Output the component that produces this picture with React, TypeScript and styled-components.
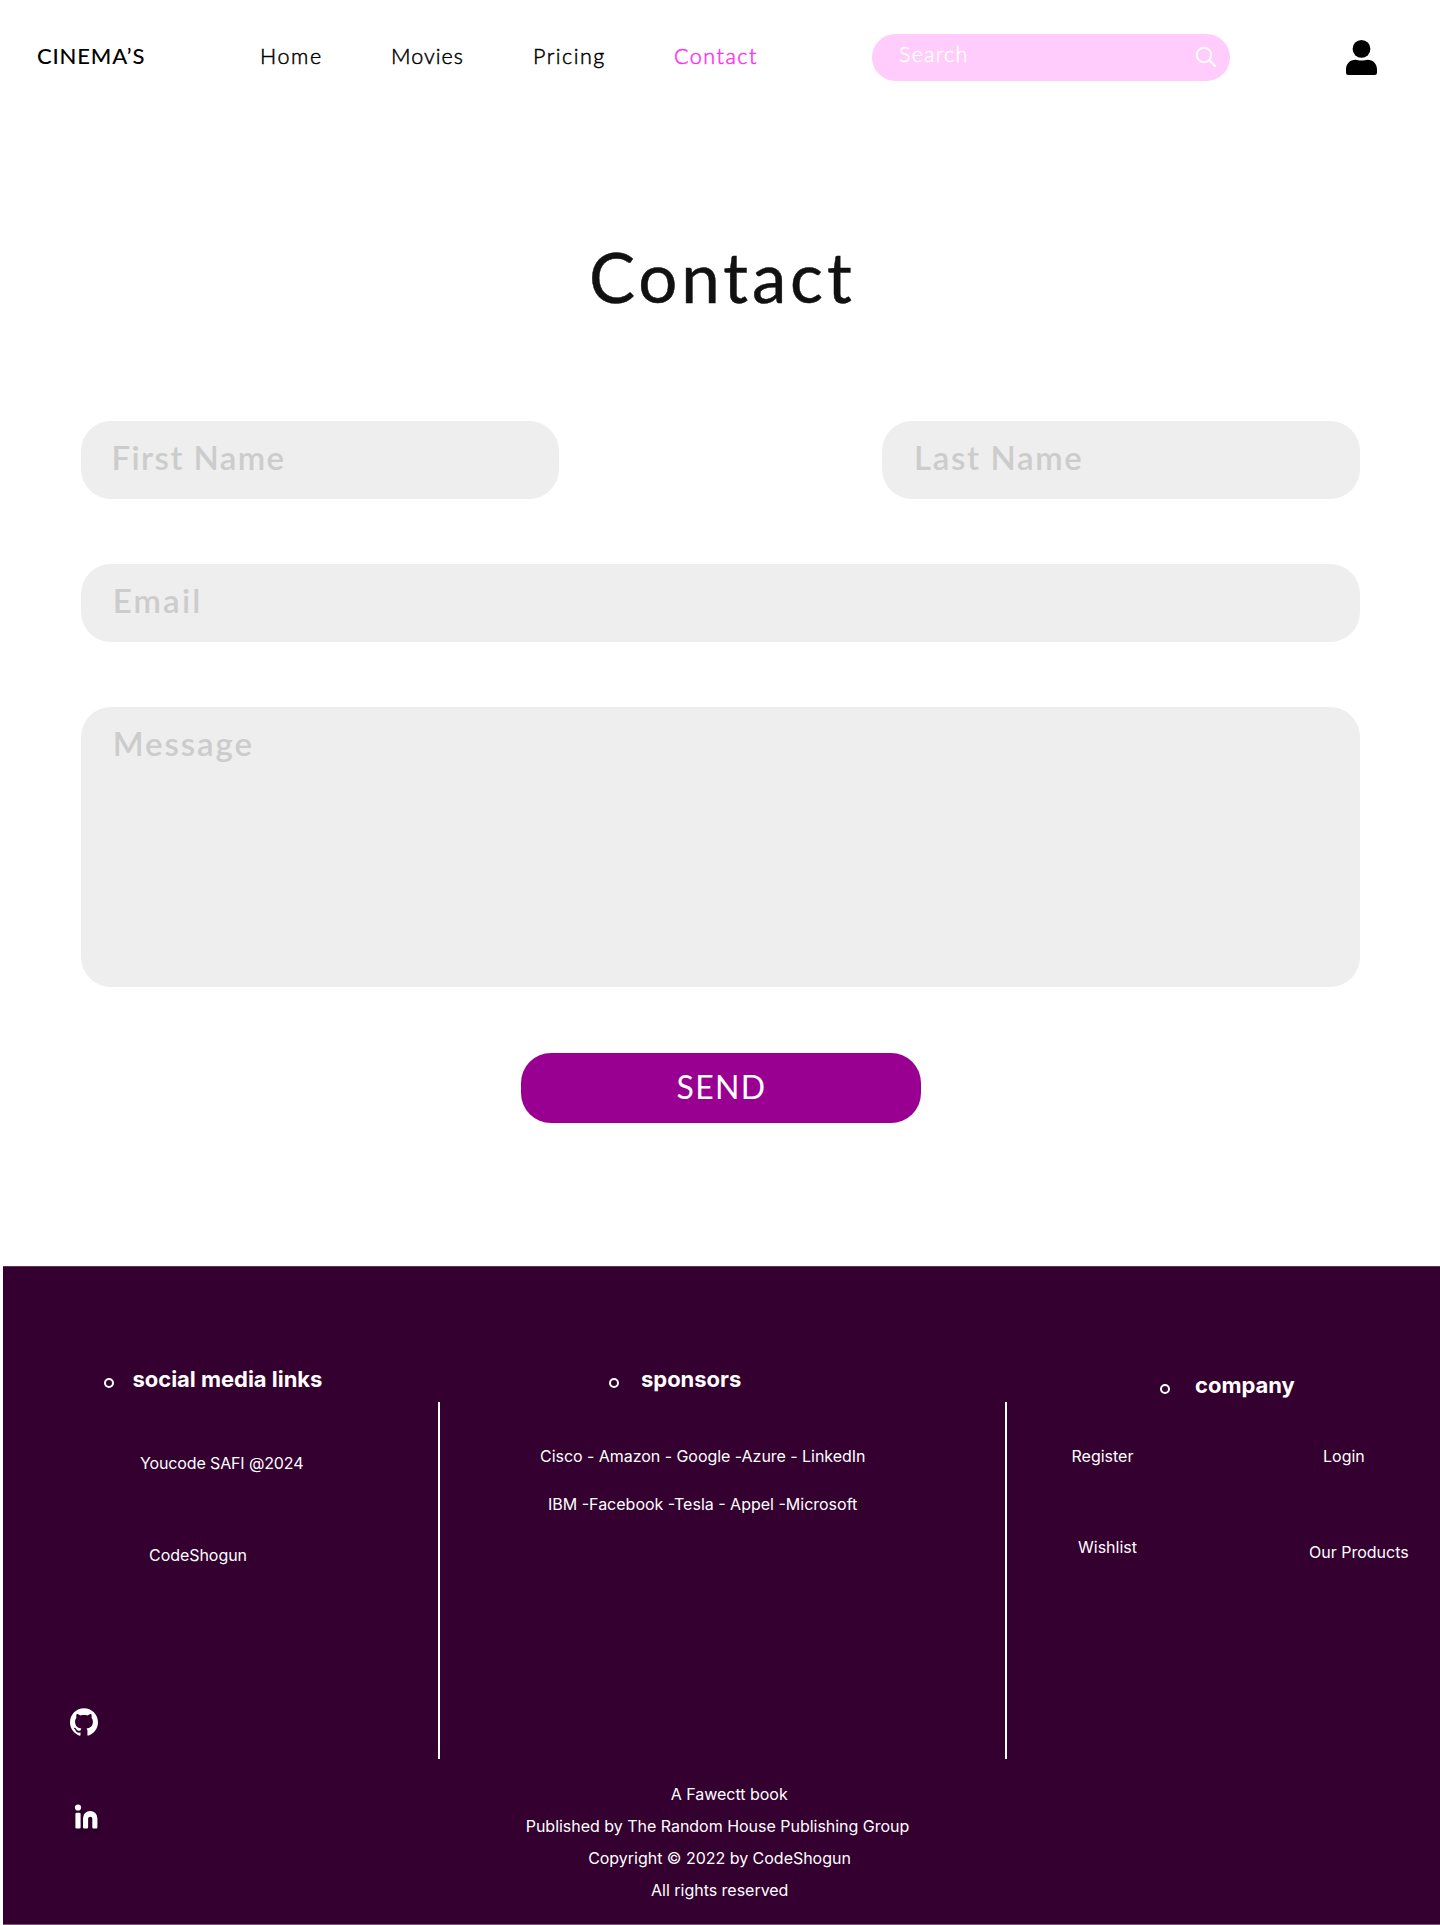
import React from "react";
import styled, { createGlobalStyle, css } from "styled-components";
import { SiGithub } from "react-icons/si";

const GlobalStyle = createGlobalStyle`
  *, *::before, *::after { box-sizing: border-box; }
  body { margin: 0; background: #fff; }
  h1, h2, p { margin: 0; font-weight: inherit; }
`;

const rounded = css`
  font-family: Lato, "Open Sans", sans-serif;
  font-kerning: normal;
`;

const thin = css`
  font-weight: 300;
  -webkit-text-stroke: 0.5px currentColor;
`;

const Page = styled.div`
  width: 1440px;
  height: 1925px;
  overflow: hidden;
  background: #fff;
`;

const Header = styled.header`
  display: flex;
  align-items: flex-start;
  height: 114px;
  padding: 34px 63px 0 37px;
  ${rounded}
  font-size: 21.5px;
  line-height: 30px;
  color: #000;
`;

const Logo = styled.div`
  width: 223px;
  padding-top: 7px;
  font-size: 22px;
  font-weight: 500;
  letter-spacing: 0.85px;
  white-space: nowrap;
`;

const Nav = styled.nav`
  display: grid;
  grid-template-columns: 131px 142px 141px 198px;
  padding-top: 7px;
  ${thin}
`;

const NavLink = styled.a<{ $active?: boolean; $spacing: number }>`
  color: ${(p) => (p.$active ? "#ff2ef8" : "#000")};
  letter-spacing: ${(p) => p.$spacing}px;
  text-decoration: none;
`;

const SearchBox = styled.div`
  display: flex;
  justify-content: space-between;
  width: 358px;
  height: 47px;
  padding: 5px 13px 0 27px;
  border-radius: 23.5px;
  background: #ffccfc;
  color: #fff;
  letter-spacing: 1.25px;
  ${thin}
`;

const SearchIcon = styled.svg`
  width: 22px;
  height: 22px;
  margin-top: 7px;
`;

const UserIcon = styled.svg`
  display: block;
  width: 31px;
  height: 35px;
  margin: 6px 0 0 116px;
`;

const Title = styled.h1`
  ${rounded}
  height: 307px;
  padding-top: 118px;
  padding-left: 589px;
  font-size: 69px;
  line-height: 90px;
  letter-spacing: 3.9px;
  color: #111;
  -webkit-text-stroke: 0.5px currentColor;
`;

const Form = styled.form`
  display: flex;
  flex-direction: column;
  gap: 65px;
  width: 1279px;
  height: 845px;
  margin-left: 81px;
  ${rounded}
`;

const NameRow = styled.div`
  display: flex;
  justify-content: space-between;
`;

const Field = styled.label<{ $width: number; $height: number; $indent: number; $spacing: number }>`
  display: block;
  width: ${(p) => p.$width}px;
  height: ${(p) => p.$height}px;
  padding: 14px 0 0 ${(p) => p.$indent}px;
  border-radius: 30px;
  background: #eee;
  color: #ccc;
  font-size: 33px;
  font-weight: 600;
  line-height: 44px;
  letter-spacing: ${(p) => p.$spacing}px;
`;

const SendButton = styled.button`
  display: block;
  width: 400px;
  height: 70px;
  margin: 1px 0 0 440px;
  padding: 0 0 2px 1px;
  border: 0;
  border-radius: 30px;
  background: #990091;
  color: #fff;
  font-family: inherit;
  font-size: 32px;
  line-height: 44px;
  letter-spacing: 1.3px;
`;

const Footer = styled.footer`
  width: 1437px;
  height: 659px;
  margin-left: 3px;
  border-top: 1px solid #5e3259;
  border-bottom: 1px solid #7d5478;
  background: #330030;
  color: #fff;
  font-family: Inter, sans-serif;
  font-size: 16px;
  line-height: 20px;
`;

const FooterColumns = styled.div`
  display: grid;
  grid-template-columns: 435px 2px 565px 2px 433px;
  height: 492px;
`;

const Divider = styled.div`
  height: 357px;
  margin-top: 135px;
  background: #fff;
`;

const Column = styled.section<{ $top: number }>`
  padding-top: ${(p) => p.$top}px;
`;

const Heading = styled.h2<{ $indent: number; $gap: number }>`
  display: flex;
  align-items: flex-start;
  gap: ${(p) => p.$gap}px;
  margin-left: ${(p) => p.$indent}px;
  height: 30px;
  font-size: 22px;
  font-weight: 700;
  line-height: 30px;
  letter-spacing: -0.03px;
`;

const Bullet = styled.span`
  width: 10px;
  height: 10px;
  margin-top: 14px;
  border: 2px solid #fff;
  border-radius: 50%;
`;

const Line = styled.p<{ $indent: number; $top: number; $spacing?: number }>`
  margin: ${(p) => p.$top}px 0 0 ${(p) => p.$indent}px;
  letter-spacing: ${(p) => p.$spacing ?? 0}px;
  white-space: nowrap;
`;

const LinkRow = styled.div<{ $top: number; $first: number; $second: number }>`
  display: grid;
  grid-template-columns: ${(p) => p.$second}px 1fr;
  padding-left: ${(p) => p.$first}px;
  margin-top: ${(p) => p.$top}px;
`;

const LinkText = styled.a<{ $drop?: number }>`
  padding-top: ${(p) => p.$drop ?? 0}px;
`;

const FooterBottom = styled.div`
  display: flex;
`;

const Social = styled.div`
  display: flex;
  flex-direction: column;
  gap: 68px;
  width: 400px;
  padding-left: 67px;
  margin-top: -51px;
`;

const LinkedInIcon = styled.svg`
  width: 24px;
  height: 26px;
  margin-left: 5px;
  overflow: visible;
  filter: drop-shadow(0 4px 2px rgba(0, 0, 0, 0.25));
`;

const Credits = styled.div`
  width: 629px;
  padding-top: 19px;
  text-align: center;
  line-height: 32px;
`;

const CreditLine = styled.p<{ $shift?: number }>`
  padding-left: ${(p) => p.$shift ?? 0}px;
  letter-spacing: -0.02px;
`;

export default function App() {
  return (
    <>
      <GlobalStyle />
      <Page>
        <Header>
          <Logo>CINEMA’S</Logo>
          <Nav>
            <NavLink $spacing={1.6}>Home</NavLink>
            <NavLink $spacing={1}>Movies</NavLink>
            <NavLink $spacing={1.5}>Pricing</NavLink>
            <NavLink $spacing={1.5} $active>Contact</NavLink>
          </Nav>
          <SearchBox>
            <span>Search</span>
            <SearchIcon viewBox="0 0 22 22" fill="none" stroke="#fff" strokeWidth="2" strokeLinecap="round">
              <circle cx="9" cy="9" r="7.2" />
              <path d="M14.3 14.3L20 20" />
            </SearchIcon>
          </SearchBox>
          <UserIcon viewBox="0 0 31 35">
            <circle cx="15.5" cy="8.9" r="8.9" />
            <path d="M0 29.5C0 24 4 19.8 9.3 19.8c2.2 0 3.4.8 6.2.8s4-.8 6.2-.8C27 19.8 31 24 31 29.5v3.3A2.2 2.2 0 0 1 28.8 35H2.2A2.2 2.2 0 0 1 0 32.8z" />
          </UserIcon>
        </Header>
        <Title>Contact</Title>
        <Form>
          <NameRow>
            <Field $width={478} $height={78} $indent={30.5} $spacing={1.4}>First Name</Field>
            <Field $width={478} $height={78} $indent={32} $spacing={1.65}>Last Name</Field>
          </NameRow>
          <Field $width={1279} $height={78} $indent={31.7} $spacing={2.2}>Email</Field>
          <Field $width={1279} $height={280} $indent={31.7} $spacing={1.9}>Message</Field>
          <SendButton type="button">SEND</SendButton>
        </Form>
        <Footer>
          <FooterColumns>
            <Column $top={97}>
              <Heading $indent={101} $gap={18.5}><Bullet /><span>social media links</span></Heading>
              <Line $indent={137} $top={59} $spacing={-0.13}>Youcode SAFI @2024</Line>
              <Line $indent={146} $top={72} $spacing={-0.05}>CodeShogun</Line>
            </Column>
            <Divider />
            <Column $top={97}>
              <Heading $indent={169} $gap={22}><Bullet /><span>sponsors</span></Heading>
              <Line $indent={100} $top={52} $spacing={-0.04}>Cisco - Amazon - Google -Azure - LinkedIn</Line>
              <Line $indent={108} $top={28}>IBM -Facebook -Tesla - Appel -Microsoft</Line>
            </Column>
            <Divider />
            <Column $top={103}>
              <Heading $indent={153} $gap={25}><Bullet /><span>company</span></Heading>
              <LinkRow $top={46} $first={64.5} $second={251.5}>
                <LinkText>Register</LinkText>
                <LinkText>Login</LinkText>
              </LinkRow>
              <LinkRow $top={71} $first={71} $second={231}>
                <LinkText>Wishlist</LinkText>
                <LinkText $drop={5}>Our Products</LinkText>
              </LinkRow>
            </Column>
          </FooterColumns>
          <FooterBottom>
            <Social>
              <SiGithub size={28} />
              <LinkedInIcon viewBox="0 0 24 26" fill="#fff">
                <circle cx="3" cy="3.5" r="3.1" />
                <rect x="0.4" y="8.7" width="5.2" height="15.8" rx="1.2" />
                <path d="M8 23.3V14.2a7.2 7.2 0 0 1 14.4 0v9.1a1.2 1.2 0 0 1-1.2 1.2h-2.7a1.2 1.2 0 0 1-1.2-1.2v-8.5a2.1 2.1 0 0 0-4.2 0v8.5a1.2 1.2 0 0 1-1.2 1.2h-2.7A1.2 1.2 0 0 1 8 23.3z" />
              </LinkedInIcon>
            </Social>
            <Credits>
              <CreditLine $shift={23.5}>A Fawectt book</CreditLine>
              <CreditLine>Published by The Random House Publishing Group</CreditLine>
              <CreditLine $shift={4}>Copyright © 2022 by CodeShogun</CreditLine>
              <CreditLine $shift={4.5}>All rights reserved</CreditLine>
            </Credits>
          </FooterBottom>
        </Footer>
      </Page>
    </>
  );
}
